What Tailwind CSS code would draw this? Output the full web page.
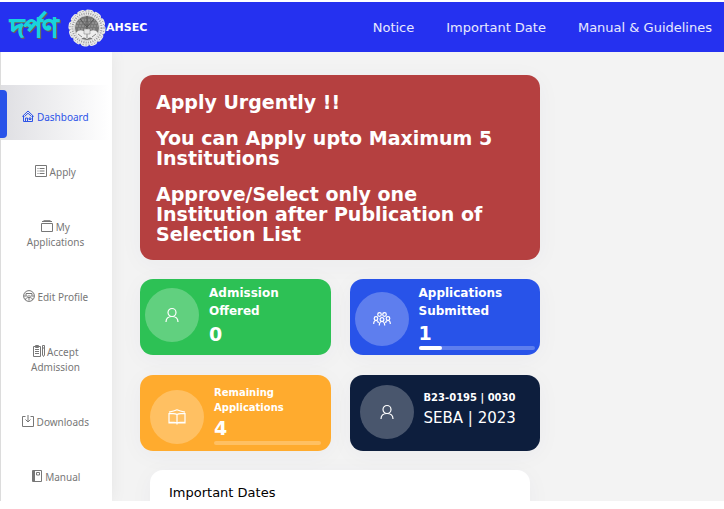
<!DOCTYPE html>
<html lang="en">
<head>
<meta charset="utf-8">
<meta name="viewport" content="width=device-width, initial-scale=1">
<title>Dashboard</title>
<script src="https://cdn.jsdelivr.net/npm/@tailwindcss/browser@4"></script>
</head>
<body class="flex h-screen flex-col bg-white pt-[2px] pb-2 font-['DejaVu_Sans',sans-serif]">
<header class="flex h-[50px] shrink-0 items-center justify-between bg-[#2531f0] pl-2 pr-3 pt-[2px] text-white">
  <a href="#" class="flex items-center text-[11px] font-bold">
    <span lang="as" class="mr-2 w-[52px] text-center text-[27px] leading-10 text-[#18d3dc] drop-shadow-[1px_1px_0_#77604a] [-webkit-text-stroke:1px_#18d3dc]">দৰ্পণ</span>
    <svg class="size-[38px]" viewBox="0 0 38 38" fill="none" aria-hidden="true">
      <circle cx="19" cy="19" r="16.500" fill="#ececec" stroke="#ececec" stroke-width="2"/>
      <circle cx="19" cy="19" r="16.600" stroke="#e8e8e8" stroke-width="4" stroke-linecap="round" stroke-dasharray="4 4.690"/>
      <circle cx="19" cy="19" r="17" stroke="#8a8a8a" stroke-width="1" stroke-dasharray="1 2"/>
      <circle cx="19" cy="19" r="14.500" stroke="#999" stroke-width="2" stroke-dasharray="1 1.300"/>
      <circle cx="19" cy="19" r="12.500" fill="#777" stroke="#d8d8d8"/>
      <path d="M11 11h16M9 14h20M8 17h22M10 20h18" stroke="#a5a5a5" stroke-width="1" stroke-dasharray="2 1"/>
      <path d="M19 7v16M12 10l7 8 7-8" stroke="#555"/>
      <path d="M8 24c3-4 7-3 11 0 4-3 8-4 11 0-1 3-3 5-5 6-2-2-4-2-6 0-2-2-4-2-6 0-2-1-4-3-5-6z" fill="#eee"/>
      <path d="M16 20h6v5h-6z" fill="#e6e6e6" stroke="#777" stroke-width=".5"/>
      <path d="M10 25l4 3M28 25l-4 3M19 25v4" stroke="#888"/>
    </svg>
    AHSEC
  </a>
  <nav class="flex gap-8 text-[13px] text-white/90">
    <a href="#">Notice</a><a href="#">Important Date</a><a href="#">Manual &amp; Guidelines</a>
  </nav>
</header>
<div class="flex min-h-0 flex-1 overflow-hidden bg-[#f3f3f3]">
  <aside class="w-28 shrink-0 border-l border-[#dcdcdc] bg-white pt-[33px] text-center font-['Noto_Sans','DejaVu_Sans',sans-serif] text-[10px] leading-[15px] text-[#777] shadow-[0_0_16px_rgba(0,0,0,0.06)]">
    <nav class="pr-[2px]">
      <a href="#" class="relative block bg-linear-to-r from-[#dfdfe3] to-white px-5 pt-[25px] pb-[15px] text-[#2c53e8]">
        <span class="absolute top-[5px] -left-px h-12 w-[7px] rounded-r-[4px] bg-[#2853e9]"></span>
        <svg class="inline size-3 align-[-1px]" viewBox="0 0 12 12" fill="none" stroke="currentColor" aria-hidden="true"><path d="M.3 6.500 6 1l5.700 5.500M1.500 5.500v6h9v-6M2.500 6.500 6 3.200l3.500 3.300M3.500 11V8h2v3M7 8h2v1.500H7z"/></svg>
        Dashboard</a>
      <a href="#" class="block px-5 pt-[25px] pb-[15px]">
        <svg class="inline size-3 align-[-1px]" viewBox="0 0 12 12" fill="none" stroke="currentColor" aria-hidden="true"><path d="M.5.500h11v11H.5zM2.500 3.500h1M2.500 6h1M2.500 8.500h1M4.500 3.500h5M4.500 6h5M4.500 8.500h5"/></svg>
        Apply</a>
      <a href="#" class="block px-5 pt-[25px] pb-[15px]">
        <svg class="inline size-3 align-[-1px]" viewBox="0 0 12 12" fill="none" stroke="currentColor" aria-hidden="true"><path d="M.5 3.500h11v8H.5zM1 1.500h10M2.500.300h7"/></svg>
        My Applications</a>
      <a href="#" class="block px-5 pt-[25px] pb-[15px]">
        <svg class="inline size-3 align-[-1px]" viewBox="0 0 12 12" fill="none" stroke="currentColor" aria-hidden="true"><circle cx="6" cy="6" r="5.400"/><path d="M2.500 10c0-2 1.500-2.500 3.500-2.500S9.500 8 9.500 10M3 3.500h6M3 3.500v2c1 1 2 1 3 0 1 1 2 1 3 0v-2M6 7.500v3M1 6h2M9 6h2"/></svg>
        Edit Profile</a>
      <a href="#" class="block px-5 pt-[25px] pb-[15px]">
        <svg class="inline size-3 align-[-1px]" viewBox="0 0 12 12" fill="none" stroke="currentColor" aria-hidden="true"><path d="M.5 1.500h7v10h-7zM2.500.500h3v2h-3zM2 4.500h4M2 6.500h4M2 8.500h4M9.500.500h2v9.500l-1 1.500-1-1.500zM9.500 3h2"/></svg>
        Accept Admission</a>
      <a href="#" class="block px-5 pt-[25px] pb-[15px]">
        <svg class="inline size-3 align-[-1px]" viewBox="0 0 12 12" fill="none" stroke="currentColor" aria-hidden="true"><path d="M3.500 1.500h-3v10h11v-10h-3M6 0v7M3.500 4.500 6 7l2.500-2.500"/></svg>
        Downloads</a>
      <a href="#" class="block px-5 pt-[25px] pb-[15px]">
        <svg class="inline size-3 align-[-1px]" viewBox="0 0 12 12" fill="none" stroke="currentColor" aria-hidden="true"><path d="M1.500.500h9v11h-9zM3.500.500v11M5.500 2.500h3v2.500h-3z"/><path d="M2.500 1v10" stroke-width="2"/></svg>
        Manual</a>
    </nav>
  </aside>
  <main class="min-w-0 flex-1 px-7 pt-[23px]">
    <div class="flex max-w-[400px] flex-col gap-[19px] text-white">
      <section class="flex flex-col gap-4 rounded-[13px] bg-[#b54040] px-4 pt-[17px] pb-4 text-[19px] leading-5 font-bold shadow-[0_4px_24px_rgba(40,40,90,0.04)]">
        <h2>Apply Urgently !!</h2>
        <h2>You can Apply upto Maximum 5 Institutions</h2>
        <h2>Approve/Select only one Institution after Publication of Selection List</h2>
      </section>
      <div class="grid grid-cols-2 gap-x-[19px] gap-y-5">
        <section class="flex min-h-[76px] items-start gap-[10px] rounded-[13px] bg-[#2dc155] p-[5px] shadow-[0_4px_24px_rgba(40,40,90,0.04)]">
          <div class="mt-1 flex size-[54px] shrink-0 items-center justify-center rounded-full bg-white/25">
            <svg class="size-4" viewBox="0 0 16 16" fill="none" stroke="currentColor" stroke-width="1.200" aria-hidden="true"><circle cx="8" cy="5.500" r="4"/><path d="M2 15c0-3.500 2-5.500 6-5.500s6 2 6 5.500"/></svg>
          </div>
          <div class="flex-1 font-bold">
            <h3 class="text-[12px] leading-[18px]">Admission<br>Offered</h3>
            <p class="text-[19px] leading-7">0</p>
          </div>
        </section>
        <section class="flex min-h-[76px] items-start gap-[10px] rounded-[13px] bg-[#2853e9] p-[5px] shadow-[0_4px_24px_rgba(40,40,90,0.04)]">
          <div class="mt-2 flex size-[54px] shrink-0 items-center justify-center rounded-full bg-white/25">
            <svg class="h-[14px] w-[18px]" viewBox="0 0 18 14" fill="none" stroke="currentColor" stroke-width="1.200" aria-hidden="true"><circle cx="6.500" cy="2.500" r="1.800"/><circle cx="11.500" cy="2.500" r="1.800"/><circle cx="3" cy="6.500" r="1.800"/><circle cx="15" cy="6.500" r="1.800"/><circle cx="9" cy="7.500" r="1.900"/><path d="M.7 12c0-2 .8-3.500 2.300-3.500S5.300 10 5.300 11M17.300 12c0-2-.8-3.500-2.300-3.500S12.700 10 12.700 11M6.300 13.500c0-2.500 1-4 2.700-4s2.700 1.500 2.700 4"/></svg>
          </div>
          <div class="flex-1 font-bold">
            <h3 class="text-[12px] leading-[18px]">Applications<br>Submitted</h3>
            <p class="text-[19px] leading-[26px]">1</p>
            <div class="h-1 rounded-full bg-white/25"><div class="h-1 rounded-full bg-white" style="width:20%"></div></div>
          </div>
        </section>
        <section class="flex min-h-[76px] items-start gap-[10px] rounded-[13px] bg-[#ffab2e] px-[10px] pt-[10px] pb-[5px] shadow-[0_4px_24px_rgba(40,40,90,0.04)]">
          <div class="mt-[5px] flex size-[54px] shrink-0 items-center justify-center rounded-full bg-white/25">
            <svg class="h-4 w-[18px]" viewBox="0 0 18 16" fill="none" stroke="currentColor" stroke-width="1.200" aria-hidden="true"><path d="M9 5.500C8 4.800 6.500 4.600 5 4.600H1v9.400h16V4.600h-4c-1.500 0-3 .2-4 .9zM9 5.500V15.500M1 13.300h5c1.500 0 2.500.3 3 .9.500-.6 1.500-.9 3-.9h5"/><path d="M1 3.200C4 2.600 6.500 2 9 .8c2.500 1.200 5 1.800 8 2.400"/></svg>
          </div>
          <div class="flex-1 font-bold">
            <h3 class="text-[10px] leading-[15px]">Remaining<br>Applications</h3>
            <p class="text-[19px] leading-[26px]">4</p>
            <div class="h-1 rounded-full bg-white/25"></div>
          </div>
        </section>
        <section class="flex min-h-[76px] items-start gap-[10px] rounded-[13px] bg-[#0d1e3d] p-[10px] shadow-[0_4px_24px_rgba(40,40,90,0.04)]">
          <div class="flex size-[54px] shrink-0 items-center justify-center rounded-full bg-white/25">
            <svg class="size-4" viewBox="0 0 16 16" fill="none" stroke="currentColor" stroke-width="1.200" aria-hidden="true"><circle cx="8" cy="5.500" r="4"/><path d="M2 15c0-3.500 2-5.500 6-5.500s6 2 6 5.500"/></svg>
          </div>
          <div class="mt-[5px] flex-1">
            <h3 class="text-[10px] leading-[15px] font-bold">B23-0195 | 0030</h3>
            <p class="text-[15px] leading-[26px]">SEBA | 2023</p>
          </div>
        </section>
      </div>
      <section class="mx-[10px] rounded-t-[13px] bg-white px-[19px] py-[14px] text-[13px] leading-[18px] text-black shadow-[0_4px_24px_rgba(40,40,90,0.04)]">
        <h2>Important Dates</h2>
      </section>
    </div>
  </main>
</div>
</body>
</html>
